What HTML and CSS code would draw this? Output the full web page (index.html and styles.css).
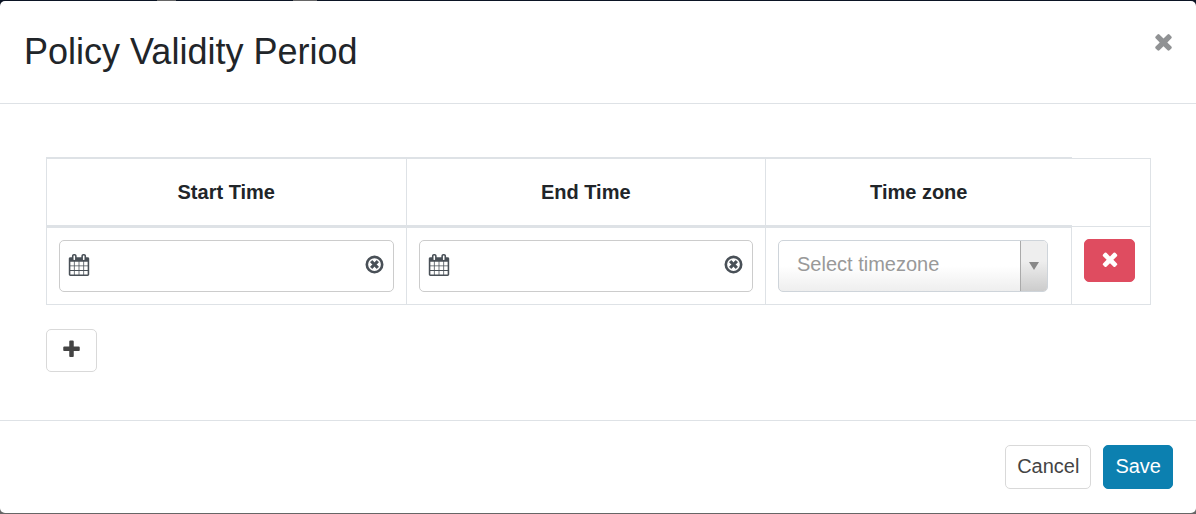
FILE: index.html
```html
<!DOCTYPE html>
<html lang="en">
<head>
  <meta charset="utf-8">
  <title>Policy Validity Period</title>
  <link rel="stylesheet" href="styles.css">
</head>
<body>
  <!-- Shared icons -->
  <svg class="icon-defs" aria-hidden="true">
    <symbol id="icon-times" viewBox="0 0 1792 1792">
      <path d="M1490 1322q0 40-28 68l-136 136q-28 28-68 28t-68-28l-294-294-294 294q-28 28-68 28t-68-28l-136-136q-28-28-28-68t28-68l294-294-294-294q-28-28-28-68t28-68l136-136q28-28 68-28t68 28l294 294 294-294q28-28 68-28t68 28l136 136q28 28 28 68t-28 68l-294 294 294 294q28 28 28 68z"/>
    </symbol>
    <symbol id="icon-plus" viewBox="0 0 1792 1792">
      <path d="M1600 736v192q0 40-28 68t-68 28h-416v416q0 40-28 68t-68 28h-192q-40 0-68-28t-28-68v-416h-416q-40 0-68-28t-28-68v-192q0-40 28-68t68-28h416v-416q0-40 28-68t68-28h192q40 0 68 28t28 68v416h416q40 0 68 28t28 68z"/>
    </symbol>
    <symbol id="icon-clear" viewBox="0 0 1792 1792">
      <circle cx="896" cy="896" r="656" fill="none" stroke="currentColor" stroke-width="224"/>
      <path d="M1245 1090q0-13-10-23l-171-171 171-171q10-10 10-23t-10-23l-122-122q-10-10-23-10t-23 10l-171 171-171-171q-10-10-23-10t-23 10l-122 122q-10 10-10 23t10 23l171 171-171 171q-10 10-10 23t10 23l122 122q10 10 23 10t23-10l171-171 171 171q10 10 23 10t23-10l122-122q10-10 10-23z" stroke="currentColor" stroke-width="40"/>
    </symbol>
    <symbol id="icon-calendar" viewBox="0 0 1792 1792">
      <path d="M192 1664h288v-288h-288v288zm352 0h320v-288h-320v288zm-352-352h288v-320h-288v320zm352 0h320v-320h-320v320zm-352-384h288v-288h-288v288zm736 736h320v-288h-320v288zm-384-736h320v-288h-320v288zm768 736h288v-288h-288v288zm-384-352h320v-320h-320v320zm-352-864v-288q0-13-9.500-22.500t-22.500-9.500h-64q-13 0-22.500 9.500t-9.500 22.500v288q0 13 9.500 22.500t22.500 9.500h64q13 0 22.500-9.500t9.500-22.500zm736 864h288v-320h-288v320zm-384-384h320v-288h-320v288zm384 0h288v-288h-288v288zm32-480v-288q0-13-9.500-22.500t-22.500-9.500h-64q-13 0-22.500 9.500t-9.500 22.500v288q0 13 9.500 22.500t22.500 9.500h64q13 0 22.500-9.500t9.500-22.500zm384-64v1280q0 52-38 90t-90 38h-1408q-52 0-90-38t-38-90v-1280q0-52 38-90t90-38h128v-96q0-66 47-113t113-47h64q66 0 113 47t47 113v96h384v-96q0-66 47-113t113-47h64q66 0 113 47t47 113v96h128q52 0 90 38t38 90z" fill-rule="evenodd"/>
    </symbol>
  </svg>

  <div class="modal" role="dialog" aria-labelledby="modalTitle">
    <header class="modal-header">
      <h1 id="modalTitle">Policy Validity Period</h1>
      <button type="button" class="close-button" aria-label="Close">
        <svg class="icon icon-lg"><use href="#icon-times"/></svg>
      </button>
    </header>

    <div class="modal-body">
      <table class="period-table">
        <thead>
          <tr>
            <th class="col-time" id="startTime">Start Time</th>
            <th class="col-time" id="endTime">End Time</th>
            <th class="col-zone" id="timeZone">Time zone</th>
            <td class="col-action"></td>
          </tr>
        </thead>
        <tbody>
          <tr>
            <td>
              <div class="date-field">
                <svg class="icon"><use href="#icon-calendar"/></svg>
                <input type="text" aria-labelledby="startTime">
                <button type="button" class="clear-button" aria-label="Clear start time">
                  <svg class="icon icon-sm"><use href="#icon-clear"/></svg>
                </button>
              </div>
            </td>
            <td>
              <div class="date-field">
                <svg class="icon"><use href="#icon-calendar"/></svg>
                <input type="text" aria-labelledby="endTime">
                <button type="button" class="clear-button" aria-label="Clear end time">
                  <svg class="icon icon-sm"><use href="#icon-clear"/></svg>
                </button>
              </div>
            </td>
            <td>
              <div class="zone-field">
                <select aria-labelledby="timeZone">
                  <option>Select timezone</option>
                </select>
                <span class="zone-arrow"></span>
              </div>
            </td>
            <td>
              <button type="button" class="btn btn-icon btn-danger" aria-label="Remove period">
                <svg class="icon"><use href="#icon-times"/></svg>
              </button>
            </td>
          </tr>
        </tbody>
      </table>

      <button type="button" class="btn btn-icon" aria-label="Add period">
        <svg class="icon icon-sm"><use href="#icon-plus"/></svg>
      </button>
    </div>

    <footer class="modal-footer">
      <button type="button" class="btn">Cancel</button>
      <button type="button" class="btn btn-primary">Save</button>
    </footer>
  </div>
</body>
</html>
```
FILE: styles.css
```css
* {
  box-sizing: border-box;
}

body {
  margin: 0;
  padding: 1px 0;
  min-height: 100vh;
  /* Page behind the dialog */
  background:
    linear-gradient(#666, #666) 157px 0 / 19px 1px no-repeat,
    linear-gradient(#666, #666) 293px 0 / 24px 1px no-repeat,
    linear-gradient(#0b1424 50%, #666 50%);
  font-family: "Liberation Sans", Arial, sans-serif;
  font-size: 20px;
  line-height: 30px;
  color: #212529;
}

button,
input,
select {
  font: inherit;
}

.icon-defs {
  position: absolute;
  width: 0;
  height: 0;
}

.icon {
  display: block;
  flex: none;
  width: 22px;
  height: 22px;
  fill: currentColor;
}

.icon-sm {
  width: 21px;
  height: 21px;
}

.icon-lg {
  width: 25px;
  height: 25px;
}

.modal {
  background-color: #fff;
  border-radius: 5px;
}

/* Header */
.modal-header {
  display: flex;
  justify-content: space-between;
  align-items: flex-start;
  padding: 24px 20px 24px 24px;
  border-bottom: 1px solid #dee2e6;
}

.modal-header h1 {
  margin: 0;
  font-size: 36px;
  font-weight: normal;
  line-height: 54px;
}

.close-button {
  padding: 4px 0;
  border: none;
  background: none;
  color: #909294;
  cursor: pointer;
}

/* Body */
.modal-body {
  padding: 53px 45px 48px 46px;
}

.period-table {
  width: 100%;
  margin-bottom: 24px;
  border: 1px solid #dee2e6;
  border-collapse: collapse;
  table-layout: fixed;
}

.period-table th {
  height: 68px;
  padding: 12px;
  border: 1px solid #dee2e6;
  border-top-width: 2px;
  border-bottom-width: 3px;
  font-weight: bold;
}

.period-table th.col-zone {
  border-right: none;
}

.period-table td {
  padding: 12px;
  border: 1px solid #dee2e6;
  vertical-align: top;
}

.period-table td.col-action {
  width: 79px;
  border-left: none;
}

.col-zone {
  width: 306px;
}

.date-field {
  display: flex;
  align-items: center;
  height: 52px;
  padding: 0 8px 2px;
  border: 1px solid #ccc;
  border-radius: 5px;
  color: #495057;
}

.date-field input {
  flex: 1;
  min-width: 0;
  padding: 0 8px;
  border: none;
  outline: none;
  background: none;
}

.clear-button {
  padding: 0;
  border: none;
  background: none;
  color: inherit;
  cursor: pointer;
}

.zone-field {
  position: relative;
  width: 270px;
}

.zone-field select {
  display: block;
  width: 100%;
  height: 52px;
  padding: 0 36px 4px 18px;
  border: 1px solid #ced4da;
  border-radius: 5px;
  appearance: none;
  background: linear-gradient(#fff 50%, #eee);
  color: #999;
}

/* Arrow segment drawn over the right end of the select */
.zone-arrow {
  position: absolute;
  top: 1px;
  right: 1px;
  bottom: 1px;
  display: flex;
  align-items: center;
  justify-content: center;
  width: 27px;
  border-left: 1px solid #aaa;
  border-radius: 0 4px 4px 0;
  background: linear-gradient(#eee 40%, #ccc);
  pointer-events: none;
}

.zone-arrow::before {
  content: "";
  border: 5px solid transparent;
  border-top: 8px solid #888;
  border-bottom: none;
}

/* Buttons */
.btn {
  padding: 5px 11px 7px;
  border: 1px solid #d9d9d9;
  border-radius: 5px;
  background-color: #fff;
  color: #444;
  cursor: pointer;
}

.btn-icon {
  display: flex;
  align-items: center;
  justify-content: center;
  width: 51px;
  height: 43px;
}

.btn-danger {
  border-color: #df4c60;
  background-color: #df4c60;
  color: #fff;
}

.btn-primary {
  border-color: #0c80b0;
  background-color: #0c80b0;
  color: #fff;
}

/* Footer */
.modal-footer {
  display: flex;
  justify-content: flex-end;
  gap: 12px;
  padding: 24px 23px 24px 24px;
  border-top: 1px solid #dee2e6;
}
```
